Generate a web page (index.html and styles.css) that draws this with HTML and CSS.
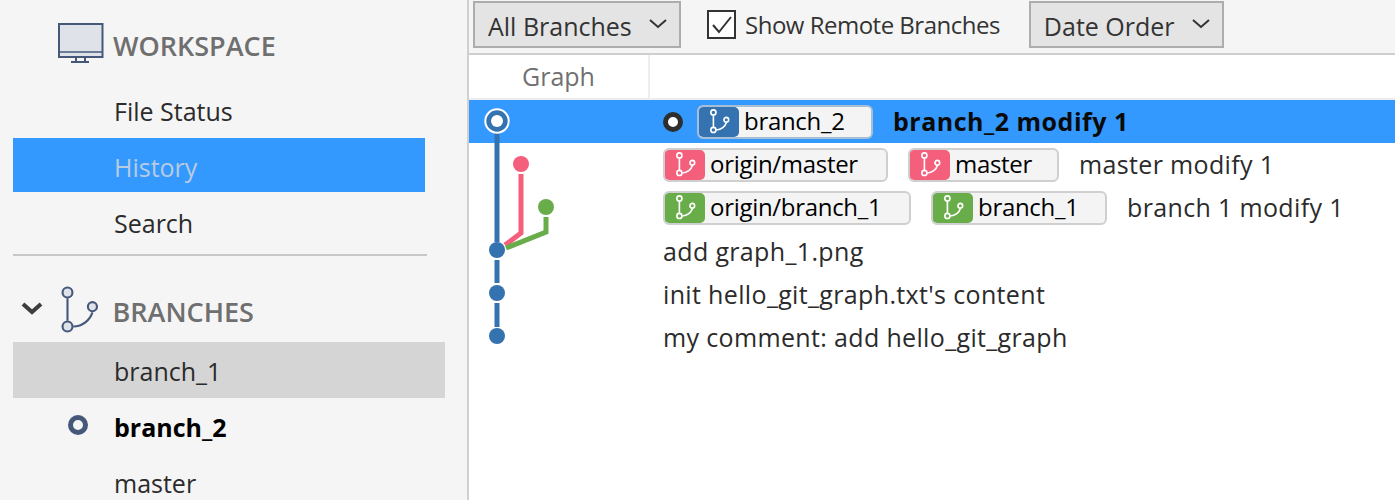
FILE: index.html
```html
<!DOCTYPE html>
<html lang="en">
<head>
  <meta charset="UTF-8" />
  <title>History</title>
  <link rel="stylesheet" href="styles.css">
</head>
<body>

<svg class="defs" width="0" height="0">
  <symbol id="branchIcon" viewBox="0 0 30 36">
    <path d="M6 10V26" fill="none"/>
    <path d="M10 30C17 30 22 25 23.600 20" fill="none"/>
    <circle cx="6" cy="6" r="3.500"/>
    <circle cx="6" cy="30" r="3.500"/>
    <circle cx="23.600" cy="16" r="3.200"/>
  </symbol>
</svg>

<!-- Sidebar -->
<aside class="sidebar">
  <div class="workspaceHead">
    <svg class="monitor" width="46" height="40" viewBox="0 0 46 40">
      <rect x="1" y="1" width="43.500" height="33" fill="#dfe2e9" stroke="#46587a" stroke-width="2"/>
      <path d="M1 29H45" stroke="#46587a" stroke-width="1.500"/>
      <path d="M18 35V38M27 35V38" stroke="#46587a" stroke-width="2"/>
      <path d="M13 39H31" stroke="#46587a" stroke-width="2"/>
    </svg>
    <span class="sectionTitle">WORKSPACE</span>
  </div>
  <div class="navItem">File Status</div>
  <div class="navItem navActive">History</div>
  <div class="navItem navLast">Search</div>
  <div class="sideDivider"></div>

  <div class="branchesHead">
    <svg class="chevron" width="22" height="14" viewBox="0 0 22 14">
      <path d="M2 2L11 10L20 2" fill="none" stroke="#3d3d3d" stroke-width="4"/>
    </svg>
    <svg class="branchesIcon" width="42.500" height="51"><use href="#branchIcon"/></svg>
    <span class="sectionTitle">BRANCHES</span>
  </div>
  <div class="branchItem branchHover">branch_1</div>
  <div class="branchItem branchCurrent"><span class="headDot"></span>branch_2</div>
  <div class="branchItem">master</div>
</aside>

<!-- Main Area -->
<main class="main">
  <div class="toolbar">
    <div class="dropdown dropBranches"><span>All Branches</span>
      <svg width="18" height="10" viewBox="0 0 18 10"><path d="M1 1L9 8L17 1" fill="none" stroke="#333" stroke-width="2"/></svg>
    </div>
    <label class="remoteCheck">
      <svg width="30" height="30" viewBox="0 0 30 30">
        <rect x="1" y="1" width="27" height="27" fill="#fff" stroke="#333" stroke-width="2"/>
        <path d="M6 15L12 22L24 7" fill="none" stroke="#333" stroke-width="2"/>
      </svg>
      Show Remote Branches
    </label>
    <div class="dropdown dropOrder"><span>Date Order</span>
      <svg width="18" height="10" viewBox="0 0 18 10"><path d="M1 1L9 8L17 1" fill="none" stroke="#333" stroke-width="2"/></svg>
    </div>
  </div>

  <div class="colHead">
    <div class="colGraph">Graph</div>
    <div class="colDesc"></div>
  </div>

  <div class="rows">
    <!-- commit graph sits on top of the rows -->
    <svg class="graph" width="100" height="260" viewBox="0 0 100 260">
      <path d="M28 33V142M28 160V183M28 203V227" stroke="#3572b0" stroke-width="5" fill="none"/>
      <path d="M52 74V133L36 145" stroke="#f45f7c" stroke-width="5" fill="none"/>
      <path d="M77 117V132L37 148" stroke="#69ad4b" stroke-width="5" fill="none"/>
      <circle cx="28" cy="21" r="11.700" fill="#3572b0" stroke="#fff" stroke-width="2"/>
      <circle cx="28" cy="21" r="6" fill="#fff"/>
      <circle cx="52" cy="64" r="8" fill="#f45f7c"/>
      <circle cx="77" cy="107" r="8" fill="#69ad4b"/>
      <circle cx="28" cy="150" r="8" fill="#3572b0"/>
      <circle cx="28" cy="193" r="8" fill="#3572b0"/>
      <circle cx="28" cy="236" r="8" fill="#3572b0"/>
    </svg>

    <div class="row rowSelected">
      <span class="rowHead"></span>
      <span class="tag tagBlue tagCurrent"><span class="tagIcon"><svg width="22" height="26.400"><use href="#branchIcon"/></svg></span>branch_2</span>
      <span class="msg msgBold">branch_2 modify 1</span>
    </div>
    <div class="row">
      <span class="tag tagRed tagOriginMaster"><span class="tagIcon"><svg width="22" height="26.400"><use href="#branchIcon"/></svg></span>origin/master</span>
      <span class="tag tagRed tagMaster"><span class="tagIcon"><svg width="22" height="26.400"><use href="#branchIcon"/></svg></span>master</span>
      <span class="msg">master modify 1</span>
    </div>
    <div class="row">
      <span class="tag tagGreen tagOriginBranch"><span class="tagIcon"><svg width="22" height="26.400"><use href="#branchIcon"/></svg></span>origin/branch_1</span>
      <span class="tag tagGreen tagBranch"><span class="tagIcon"><svg width="22" height="26.400"><use href="#branchIcon"/></svg></span>branch_1</span>
      <span class="msg">branch 1 modify 1</span>
    </div>
    <div class="row"><span class="msg msgOnly">add graph_1.png</span></div>
    <div class="row"><span class="msg msgOnly">init hello_git_graph.txt's content</span></div>
    <div class="row"><span class="msg msgOnly">my comment: add hello_git_graph</span></div>
  </div>
</main>

</body>
</html>
```

FILE: styles.css
```css
* { box-sizing: border-box; }

html, body {
  height: 500px;
  overflow: hidden;
}

body {
  margin: 0;
  display: flex;
  background-color: #fff;
  color: #2b2b2b;
  font-family: "Open Sans", "Noto Sans", sans-serif;
  font-size: 25px;
}

.defs { position: absolute; }

/* Sidebar */
.sidebar {
  width: 469px;
  height: 500px;
  flex: none;
  overflow: hidden;
  background-color: #f5f5f5;
  border-right: 2px solid #d0d0d0;
  padding-left: 13px;
}

.workspaceHead {
  display: flex;
  align-items: center;
  height: 84px;
  padding: 6px 0 0 45px;
}

.monitor { margin-right: 9px; margin-bottom: 5px; }

.sectionTitle {
  color: #6f6f6f;
  font-size: 27px;
  font-weight: 600;
}

.navItem {
  width: 412px;
  height: 54px;
  padding-left: 101px;
  line-height: 54px;
}

.navActive {
  background-color: #3399ff;
  color: #b9cbe0;
  line-height: 58px;
}

.navLast {
  height: 62px;
  line-height: 62px;
}

.sideDivider {
  width: 414px;
  height: 2px;
  background-color: #c8c8c8;
}

.branchesHead {
  display: flex;
  align-items: center;
  height: 86px;
  color: #46587a;
  padding: 24px 0 0 8px;
}

.chevron { margin-right: 16px; margin-bottom: 5px; }

.branchesIcon {
  margin-right: 11px;
  margin-bottom: 3px;
  fill: #dfe2e9;
  stroke: currentColor;
  stroke-width: 1.500;
}

.branchItem {
  position: relative;
  width: 432px;
  height: 56px;
  padding-left: 101px;
  line-height: 58px;
}

.branchHover { background-color: #d5d5d5; }

.branchCurrent {
  color: #000;
  font-weight: 700;
}

.headDot {
  position: absolute;
  left: 55px;
  top: 17px;
  width: 20px;
  height: 20px;
  border: 5px solid #46587a;
  border-radius: 50%;
}

/* Main */
.main {
  flex: 1;
  min-width: 0;
}

.toolbar {
  display: flex;
  align-items: flex-start;
  height: 55px;
  padding: 1px 0 0 4px;
  background-color: #f5f5f5;
  border-bottom: 2px solid #cfcfcf;
}

.dropdown {
  display: flex;
  align-items: center;
  justify-content: space-between;
  height: 47px;
  padding: 2px 12px 0 13px;
  background-color: #e4e4e4;
  border: 2px solid #adadad;
  color: #333;
}

.dropdown svg { margin-top: -4px; }

.dropBranches { width: 208px; }
.dropOrder { width: 195px; margin-left: 29px; }

.remoteCheck {
  display: flex;
  align-items: center;
  gap: 8px;
  height: 47px;
  margin-left: 26px;
  color: #333;
  font-size: 24px;
  letter-spacing: -0.5px;
}

.colHead {
  display: flex;
  height: 45px;
  border-bottom: 2px solid #ededed;
}

.colGraph {
  width: 181px;
  border-right: 2px solid #ededed;
  padding-left: 53px;
  line-height: 43px;
  color: #707070;
}

.rows { position: relative; }

.graph {
  position: absolute;
  top: 0;
  left: 0;
  z-index: 2;
}

.row {
  position: relative;
  display: flex;
  align-items: center;
  height: 43px;
  padding-left: 194px;
}

.rowSelected {
  background-color: #3399ff;
  padding-left: 228px;
}

.rowHead {
  position: absolute;
  left: 194px;
  top: 12px;
  width: 20px;
  height: 20px;
  background-color: #fff;
  border: 5px solid #2e2e2e;
  border-radius: 50%;
}

.tag {
  display: flex;
  align-items: center;
  flex: none;
  height: 34px;
  padding-bottom: 2px;
  background-color: #f4f4f4;
  border: 2px solid #cfcfcf;
  border-radius: 6px;
  color: #000;
  font-size: 24px;
  letter-spacing: -0.3px;
  overflow: hidden;
}

.tagCurrent { border-color: #a6bed6; }

.tagIcon {
  display: flex;
  align-items: center;
  justify-content: center;
  align-self: stretch;
  width: 41px;
  margin: 0 5px -2px -1px;
  padding-left: 2px;
  color: #fff;
  border-radius: 5px;
}

.tagIcon svg {
  fill: none;
  stroke: currentColor;
  stroke-width: 2.200;
}

.tagBlue .tagIcon { background-color: #3572b0; }
.tagRed .tagIcon { background-color: #f45f7c; }
.tagGreen .tagIcon { background-color: #69ad4b; }

.tagCurrent { width: 176px; }
.tagOriginMaster { width: 225px; }
.tagMaster { width: 151px; margin-left: 20px; }
.tagOriginBranch { width: 248px; }
.tagBranch { width: 176px; margin-left: 20px; }

.msg {
  margin-left: 20px;
  margin-bottom: 2px;
  letter-spacing: 0.35px;
}

.msgBold {
  color: #0a0a0a;
  font-weight: 700;
  letter-spacing: 0.5px;
}

.msgOnly { margin-left: 0; margin-bottom: 0; }
```
